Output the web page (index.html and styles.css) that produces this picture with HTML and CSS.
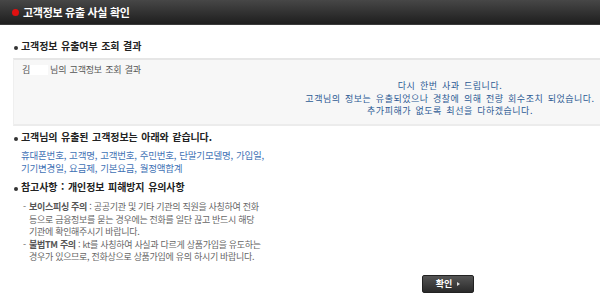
FILE: index.html
```html
<!DOCTYPE html>
<html lang="ko">
<head>
<meta charset="utf-8">
<title>고객정보 유출 사실 확인</title>
<link rel="stylesheet" href="styles.css">
</head>
<body>
<header class="top">
  <span class="top-dot"></span>
  <h1 class="top-title">고객정보 유출 사실 확인</h1>
</header>
<main class="content">
  <section class="sec sec-result">
    <h2 class="sec-title">고객정보 유출여부 조회 결과</h2>
    <div class="result-box">
      <p class="who">김<span class="mask"></span>님의 고객정보 조회 결과</p>
      <p class="apology">다시 한번 사과 드립니다.<br>고객님의 정보는 유출되었으나 경찰에 의해 전량 회수조치 되었습니다.<br>추가피해가 없도록 최선을 다하겠습니다.</p>
    </div>
  </section>
  <section class="sec sec-items">
    <h2 class="sec-title">고객님의 유출된 고객정보는 아래와 같습니다.</h2>
    <p class="items">휴대폰번호, 고객명, 고객번호, 주민번호, 단말기모델명, 가입일,<br>기기변경일, 요금제, 기본요금, 월정액합계</p>
  </section>
  <section class="sec sec-notes">
    <h2 class="sec-title">참고사항 : 개인정보 피해방지 유의사항</h2>
    <ul class="notes">
      <li><b>보이스피싱 주의</b> : 공공기관 및 기타 기관의 직원을 사칭하여 전화<br>등으로 금융정보를 묻는 경우에는 전화를 일단 끊고 반드시 해당<br>기관에 확인해주시기 바랍니다.</li>
      <li><b>불법TM 주의</b> : kt를 사칭하여 사실과 다르게 상품가입을 유도하는<br>경우가 있으므로, 전화상으로 상품가입에 유의 하시기 바랍니다.</li>
    </ul>
  </section>
  <div class="actions">
    <button class="btn" type="button">확인<span class="btn-arrow"></span></button>
  </div>
</main>
</body>
</html>
```
FILE: styles.css
```css
* { box-sizing: border-box; }
html, body { margin: 0; padding: 0; background: #fff; }
body {
  font-family: "Noto Sans CJK KR", "Noto Sans", sans-serif;
  color: #333;
  width: 600px;
  overflow: hidden;
}
p, h1, h2, ul { margin: 0; padding: 0; }

.top {
  height: 25px;
  display: flex;
  align-items: center;
  padding-left: 12px;
  background: linear-gradient(#474747, #1e1e1e);
  border-bottom: 1px solid #3a3a3a;
}
.top-dot {
  width: 7px;
  height: 7px;
  border-radius: 50%;
  background: #e01010;
  margin-right: 4px;
}
.top-title {
  font-size: 11px;
  font-weight: 700;
  color: #fff;
  letter-spacing: -0.3px;
  line-height: 1;
}

.content { padding: 0 0 0 13px; }

.sec-title {
  position: relative;
  font-size: 10px;
  font-weight: 700;
  color: #222;
  line-height: 14px;
  padding-left: 8px;
  letter-spacing: -0.1px;
  word-spacing: 1px;
}
.sec-title::before {
  content: "";
  position: absolute;
  left: 1px;
  top: 7px;
  width: 4px;
  height: 4px;
  border-radius: 50%;
  background: #333;
}
.sec-result { padding-top: 14px; }
.sec-result .sec-title { margin-bottom: 5px; }

.result-box {
  background: #f7f7f7;
  border-top: 2px solid #e6e6e6;
  border-bottom: 2px solid #ececec;
  border-left: 1px solid #efefef;
  height: 68px;
  padding: 3px 0 0 8px;
}
.who {
  font-size: 9px;
  color: #555;
  line-height: 13px;
  display: flex;
  align-items: center;
  letter-spacing: -0.2px;
  word-spacing: 1px;
}
.mask {
  display: inline-block;
  width: 18px;
  height: 10px;
  background: #fff;
  margin-right: 2px;
}
.apology {
  margin: 4px 0 0 277px;
  width: 302px;
  text-align: center;
  white-space: nowrap;
  font-size: 9px;
  line-height: 12.5px;
  color: #2c5a94;
  letter-spacing: 0.5px;
  word-spacing: 1.5px;
}

.sec-items { padding-top: 4px; }
.items {
  margin-top: 5px;
  padding-left: 8px;
  font-size: 9.5px;
  line-height: 12.5px;
  color: #3f72b5;
  letter-spacing: -0.2px;
  word-spacing: 0.5px;
}

.sec-notes { padding-top: 6px; }
.notes {
  list-style: none;
  margin-top: 7px;
  padding-left: 10px;
  font-size: 9px;
  line-height: 12.5px;
  color: #666;
  letter-spacing: -0.3px;
}
.notes li { position: relative; padding-left: 6px; }
.notes li::before {
  content: "-";
  position: absolute;
  left: 0;
  top: 0;
}
.notes b { font-weight: 700; color: #555; }

.actions {
  display: flex;
  justify-content: flex-start;
  padding: 11px 0 0 409px;
}
.btn {
  width: 52px;
  height: 18px;
  border: 1px solid #222;
  border-radius: 2px;
  background: linear-gradient(#555, #2a2a2a);
  color: #fff;
  font-family: "Noto Sans CJK KR", sans-serif;
  font-size: 9px;
  font-weight: 700;
  display: flex;
  align-items: center;
  justify-content: center;
  padding: 0;
  gap: 5px;
}
.btn-arrow {
  width: 0;
  height: 0;
  border-left: 3px solid #ddd;
  border-top: 2.5px solid transparent;
  border-bottom: 2.5px solid transparent;
}
```
